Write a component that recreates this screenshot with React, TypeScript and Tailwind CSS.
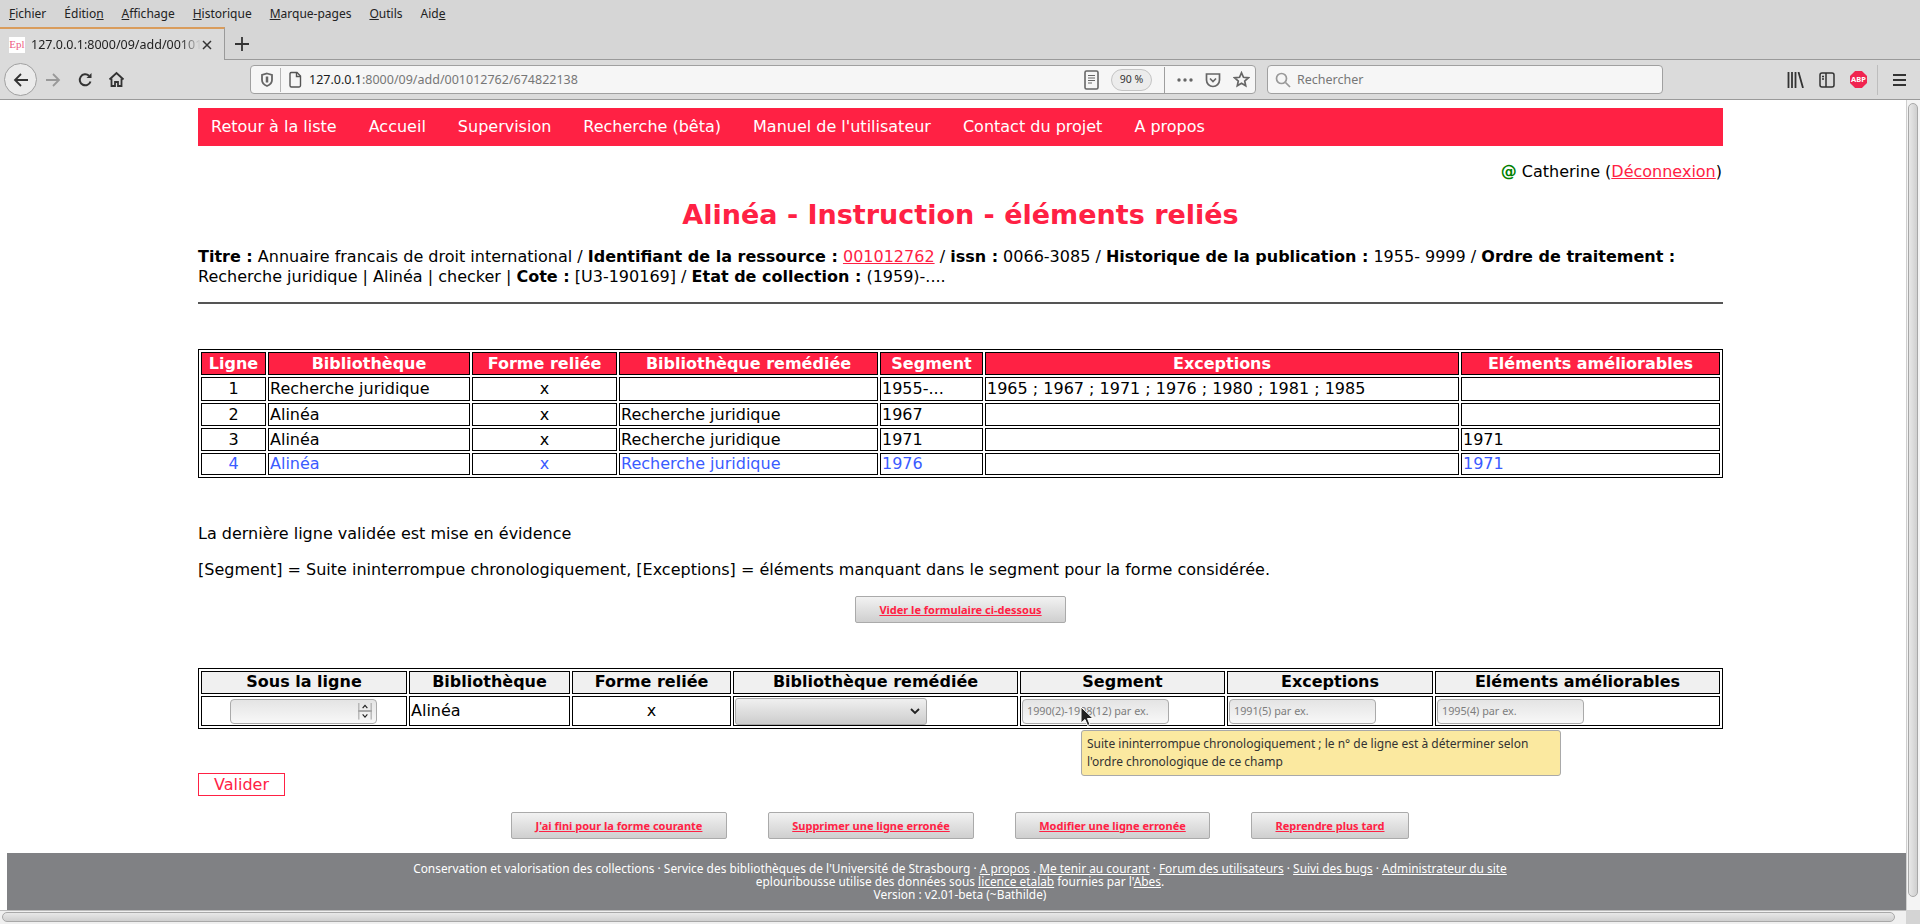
import React from "react";

const RED = "text-[#ff2144]";

function U({ children }: { children: React.ReactNode }) {
  return <span className="underline">{children}</span>;
}

function MenuBar() {
  return (
    <div className="h-[27px] bg-[#d6d6d6] flex items-center pl-[9px] gap-[18px] text-[12px] text-[#222] font-['Noto_Sans',sans-serif]">
      <span><U>F</U>ichier</span>
      <span>Éditio<U>n</U></span>
      <span><U>A</U>ffichage</span>
      <span><U>H</U>istorique</span>
      <span><U>M</U>arque-pages</span>
      <span><U>O</U>utils</span>
      <span>Aid<U>e</U></span>
    </div>
  );
}

function TabStrip() {
  return (
    <div className="h-[33px] bg-[#d6d6d6] flex border-b border-[#9a9a9a] font-['Noto_Sans',sans-serif]">
      <div className="w-[225px] h-[33px] border-t-2 border-[#d99c5c] border-r border-r-[#9a9a9a] bg-[#dadada] flex items-center pl-[9px] pr-[11px]">
        <div className="w-[16px] h-[16px] bg-white flex items-center justify-center text-[11px] leading-none text-[#ee5a80] font-['Liberation_Serif',serif] shrink-0">Epl</div>
        <span className="ml-[6px] pt-px text-[12.5px] text-[#222] whitespace-nowrap overflow-hidden w-[170px] [mask-image:linear-gradient(to_right,black_88%,transparent)]">127.0.0.1:8000/09/add/00101</span>
        <svg width="12" height="12" viewBox="0 0 12 12" className="ml-auto shrink-0" stroke="#333" strokeWidth="1.5"><path d="M2 2l8 8M10 2l-8 8" /></svg>
      </div>
      <svg width="16" height="16" viewBox="0 0 16 16" className="ml-[9px] mt-[9px]" stroke="#333" strokeWidth="1.8"><path d="M8 1v14M1 8h14" /></svg>
    </div>
  );
}

function Toolbar() {
  return (
    <div className="h-[40px] bg-[#dbdbdb] border-b border-[#9a9a9a] flex items-center font-['Noto_Sans',sans-serif]">
      <div className="ml-[4px] w-[33px] h-[33px] rounded-full border border-[#a0a0a0] bg-[#ebebeb] flex items-center justify-center shrink-0">
        <svg width="18" height="18" viewBox="0 0 18 18" fill="none" stroke="#333" strokeWidth="1.8"><path d="M16 9H3M9 3L3 9l6 6" /></svg>
      </div>
      <svg width="18" height="18" viewBox="0 0 18 18" fill="none" stroke="#999" strokeWidth="1.8" className="ml-[7px] shrink-0"><path d="M2 9h13M9 3l6 6-6 6" /></svg>
      <svg width="16" height="16" viewBox="0 0 16 16" fill="none" stroke="#333" strokeWidth="2" className="ml-[15px] shrink-0"><path d="M13.5 9.5A5.5 5.5 0 1 1 12 3.8" /><path d="M14.5 1v5h-5z" fill="#333" stroke="none" /></svg>
      <svg width="17" height="17" viewBox="0 0 17 17" className="ml-[15px] shrink-0" fill="none" stroke="#333" strokeWidth="1.8"><path d="M1.5 8.5L8.5 2l7 6.500" /><path d="M3.500 7.500V15h3.500v-4h3v4h3.500V7.500" /></svg>
      <div className="ml-[125px] w-[1006px] h-[29px] bg-[#f6f6f6] border border-[#a0a0a0] rounded-[4px] flex items-center shrink-0">
        <svg width="14" height="16" viewBox="0 0 14 16" className="ml-[9px] shrink-0" fill="none" stroke="#666" strokeWidth="1.800"><path d="M7 1.500l5 1.500v5c0 3-2.500 5-5 6-2.500-1-5-3-5-6V3z" /><path d="M7 4.500v6" strokeWidth="2.500" /></svg>
        <div className="w-px h-[24px] bg-[#b5b5b5] ml-[6px]" />
        <svg width="14" height="17" viewBox="0 0 14 17" className="ml-[7px] shrink-0" fill="none" stroke="#555" strokeWidth="1.400"><path d="M2 2.500a1.500 1.500 0 0 1 1.500-1H9l3.500 3.500v9.500a1.500 1.500 0 0 1-1.500 1.500H3.500A1.500 1.500 0 0 1 2 14.500z" /><path d="M8.500 1.500V5.500h4" /></svg>
        <span className="ml-[7px] pt-[2px] text-[12.500px] text-[#767676]"><span className="text-[#1c1c1c]">127.0.0.1</span>:8000/09/add/001012762/674822138</span>
        <svg width="15" height="20" viewBox="0 0 15 20" className="ml-auto shrink-0" fill="none" stroke="#666" strokeWidth="1.600"><rect x="1" y="1" width="13" height="18" rx="1.500" /><path d="M4 5.500h7M4 8h7M4 10.500h7M4 13h4" strokeWidth="1.100" /></svg>
        <div className="ml-[12px] w-[41px] h-[22px] rounded-full border border-[#c4c4c4] bg-[#ececec] flex items-center justify-center text-[10.500px] text-[#333] shrink-0">90 %</div>
        <div className="w-px h-[26px] bg-[#9e9e9e] ml-[12px]" />
        <svg width="16" height="4" viewBox="0 0 16 4" className="ml-[12px] shrink-0" fill="#666"><circle cx="2" cy="2" r="1.700" /><circle cx="8" cy="2" r="1.700" /><circle cx="14" cy="2" r="1.700" /></svg>
        <svg width="16" height="16" viewBox="0 0 16 16" className="ml-[12px] shrink-0" fill="none" stroke="#666" strokeWidth="1.700"><path d="M1.500 2h13v6a6.500 6.500 0 0 1-13 0z" /><path d="M5 6.500l3 3 3-3" /></svg>
        <svg width="17" height="17" viewBox="0 0 17 17" className="ml-[12px] shrink-0" fill="none" stroke="#666" strokeWidth="1.700"><path d="M8.500 1.800l2 4.500 4.800.5-3.600 3.200 1 4.800-4.200-2.500-4.200 2.500 1-4.800L1.700 6.800l4.800-.5z" /></svg>
        <span className="w-[5px] shrink-0" />
      </div>
      <div className="ml-[11px] w-[396px] h-[29px] bg-[#f6f6f6] border border-[#a0a0a0] rounded-[4px] flex items-center shrink-0">
        <svg width="16" height="16" viewBox="0 0 16 16" className="ml-[7px] shrink-0" fill="none" stroke="#999" strokeWidth="1.700"><circle cx="6.500" cy="6.500" r="5" /><path d="M10.500 10.500l4.500 4.500" /></svg>
        <span className="ml-[6px] pt-[2px] text-[12.500px] text-[#777]">Rechercher</span>
      </div>
      <svg width="17" height="16" viewBox="0 0 17 16" className="ml-[124px] shrink-0" fill="none" stroke="#333" strokeWidth="1.800"><path d="M1.500 0v16M5 0v16M8.500 0v16M11.500 0l4.500 16" /></svg>
      <svg width="16" height="16" viewBox="0 0 16 16" className="ml-[15px] shrink-0" fill="none" stroke="#333" strokeWidth="1.500"><rect x="1" y="1" width="14" height="14" rx="2" /><path d="M7 1v14M3 4.500h2M3 7h2" /></svg>
      <div className="ml-[15px] w-[17px] h-[17px] [clip-path:polygon(30%_0,70%_0,100%_30%,100%_70%,70%_100%,30%_100%,0_70%,0_30%)] bg-[#f0244f] flex items-center justify-center text-white text-[7.500px] font-bold leading-none shrink-0">ABP</div>
      <div className="ml-[10px] w-px h-[30px] bg-[#bdbdbd] shrink-0" />
      <svg width="13" height="14" viewBox="0 0 13 14" className="ml-[15px] shrink-0" stroke="#333" strokeWidth="1.800"><path d="M0 2h13M0 7h13M0 12h13" /></svg>
    </div>
  );
}

const th1 = "bg-[#ff2144] text-white font-bold border border-black p-0 h-[23px] leading-none";
const td = "border border-black px-px py-0 leading-none";
const rowHeights = ["h-[24px]", "h-[23px]", "h-[23px]", "h-[22px]"];

type Row = [string, string, string, string, string, string, string];
const rows: Row[] = [
  ["1", "Recherche juridique", "x", "", "1955-...", "1965 ; 1967 ; 1971 ; 1976 ; 1980 ; 1981 ; 1985", ""],
  ["2", "Alinéa", "x", "Recherche juridique", "1967", "", ""],
  ["3", "Alinéa", "x", "Recherche juridique", "1971", "", "1971"],
  ["4", "Alinéa", "x", "Recherche juridique", "1976", "", "1971"],
];

function ResultTable() {
  return (
    <table className="mt-[45px] w-[1525px] table-fixed border-separate border-spacing-[2px] border border-black">
      <thead>
        <tr>
          <th className={`${th1} w-[65px]`}>Ligne</th>
          <th className={`${th1} w-[202px]`}>Bibliothèque</th>
          <th className={`${th1} w-[145px]`}>Forme reliée</th>
          <th className={`${th1} w-[259px]`}>Bibliothèque remédiée</th>
          <th className={`${th1} w-[103px]`}>Segment</th>
          <th className={`${th1} w-[474px]`}>Exceptions</th>
          <th className={`${th1} w-[259px]`}>Eléments améliorables</th>
        </tr>
      </thead>
      <tbody>
        {rows.map((r, i) => (
          <tr key={i} className={i === 3 ? "text-[#3a5bff]" : "text-black"}>
            <td className={`${td} ${rowHeights[i]} text-center`}>{r[0]}</td>
            <td className={td}>{r[1]}</td>
            <td className={`${td} text-center`}>{r[2]}</td>
            <td className={td}>{r[3]}</td>
            <td className={td}>{r[4]}</td>
            <td className={td}>{r[5]}</td>
            <td className={td}>{r[6]}</td>
          </tr>
        ))}
      </tbody>
    </table>
  );
}

const th2 = "bg-[#f0f0f0] text-black font-bold border border-black p-0 h-[23px] leading-none pb-px";
const fieldBg = "bg-gradient-to-b from-[#e4e4e4] to-[#f8f8f8] border border-[#aaaaaa] rounded-[4px]";

function PlaceInput({ text, w }: { text: string; w: string }) {
  return (
    <input
      readOnly
      placeholder={text}
      className={`${w} h-[25px] block ${fieldBg} px-[4px] pb-[2px] text-[10.800px] font-['Noto_Sans',sans-serif] placeholder:text-[#7d7d7d] outline-none`}
    />
  );
}

function FormTable() {
  return (
    <div className="relative mt-[45px]">
      <table className="w-[1525px] table-fixed border-separate border-spacing-[2px] border border-black">
        <thead>
          <tr>
            <th className={`${th2} w-[206px]`}>Sous la ligne</th>
            <th className={`${th2} w-[161px]`}>Bibliothèque</th>
            <th className={`${th2} w-[159px]`}>Forme reliée</th>
            <th className={`${th2} w-[285px]`}>Bibliothèque remédiée</th>
            <th className={`${th2} w-[205px]`}>Segment</th>
            <th className={`${th2} w-[206px]`}>Exceptions</th>
            <th className={`${th2} w-[285px]`}>Eléments améliorables</th>
          </tr>
        </thead>
        <tbody>
          <tr>
            <td className="border border-black p-0 h-[30px]">
              <div className={`ml-[28px] w-[147px] h-[25px] ${fieldBg} flex justify-end pr-[4px] py-[3px]`}>
                <div className="w-[14px] flex flex-col">
                  <svg width="14" height="8" viewBox="0 0 14 8" fill="none"><path d="M.5 8V0M13.500 8V0" stroke="#999" /><path d="M4.500 5.500L7 2.500l2.500 3" stroke="#222" strokeWidth="1.200" /></svg>
                  <div className="h-[2px] bg-[#a8a8a8]" />
                  <svg width="14" height="8" viewBox="0 0 14 8" fill="none"><path d="M.5 0v8M13.500 0v8" stroke="#999" /><path d="M4.500 2.500L7 5.500l2.500-3" stroke="#222" strokeWidth="1.200" /></svg>
                </div>
              </div>
            </td>
            <td className="border border-black px-px py-0 leading-none">Alinéa</td>
            <td className="border border-black p-0 text-center leading-none">x</td>
            <td className="border border-black p-0">
              <div className="ml-px w-[192px] h-[27px] bg-gradient-to-b from-[#f0f0f0] to-[#cdcdcd] border border-[#aaaaaa] rounded-[3px] flex items-center justify-end pr-[6px]">
                <svg width="10" height="7" viewBox="0 0 10 7" fill="none" stroke="#222" strokeWidth="1.800"><path d="M1 1l4 4 4-4" /></svg>
              </div>
            </td>
            <td className="border border-black p-0 pl-px"><PlaceInput text="1990(2)-1998(12) par ex." w="w-[147px]" /></td>
            <td className="border border-black p-0 pl-px"><PlaceInput text="1991(5) par ex." w="w-[147px]" /></td>
            <td className="border border-black p-0 pl-px"><PlaceInput text="1995(4) par ex." w="w-[147px]" /></td>
          </tr>
        </tbody>
      </table>
      <div className="absolute left-[883px] top-[62px] w-[480px] h-[46px] bg-[#fbe9a0] border border-[#a9a9a9] rounded-[3px] px-[5px] text-[12px] leading-[18px] text-[#333] font-['Noto_Sans',sans-serif] py-[4px]">
        Suite ininterrompue chronologiquement ; le n° de ligne est à déterminer selon l'ordre chronologique de ce champ
      </div>
      <svg width="14" height="21" viewBox="0 0 14 21" className="absolute left-[882px] top-[38px]"><path d="M1 1v16l4-3.500 2.500 6 2.500-1-2.500-6H13z" fill="#222" stroke="#fff" strokeWidth="1" /></svg>
    </div>
  );
}

function LinkButton({ label, w, ml }: { label: string; w: string; ml?: string }) {
  return (
    <button className={`${w} ${ml ?? ""} h-[27px] bg-gradient-to-b from-[#f2f2f2] to-[#cfcfcf] border border-[#aaaaaa] rounded-[2px] text-[11px] font-bold underline ${RED} font-['Noto_Sans',sans-serif]`}>
      {label}
    </button>
  );
}

function Footer() {
  return (
    <div className="mt-[14px] h-[58px] bg-[#808184] text-white text-[11.900px] leading-[13px] text-center pt-[9px] pl-[7px] font-['Noto_Sans',sans-serif]">
      <div>
        Conservation et valorisation des collections · Service des bibliothèques de l'Université de Strasbourg · <U>A propos</U> . <U>Me tenir au courant</U> · <U>Forum des utilisateurs</U> · <U>Suivi des bugs</U> · <U>Administrateur du site</U>
      </div>
      <div>
        eplouribousse utilise des données sous <U>licence etalab</U> fournies par l'<U>Abes</U>.
      </div>
      <div>Version : v2.01-beta (~Bathilde)</div>
    </div>
  );
}

const nav = ["Retour à la liste", "Accueil", "Supervision", "Recherche (bêta)", "Manuel de l'utilisateur", "Contact du projet", "A propos"];

function Page() {
  return (
    <div className="flex-1 min-w-0 pl-[7px] bg-white text-black text-[16px] leading-[20px] font-['DejaVu_Sans',sans-serif] overflow-hidden">
      <div className="w-[1525px] ml-[191px]">
        <div className="mt-[8px] h-[38px] bg-[#ff2144] text-white flex items-center gap-[32px] pl-[13px]">
          {nav.map((n) => <span key={n}>{n}</span>)}
        </div>
        <div className="mt-[16px] text-right pr-[1px]">
          <span className="text-[#008000] font-bold">@</span> Catherine (<span className={`${RED} underline`}>Déconnexion</span>)
        </div>
        <h1 className={`mt-[16px] h-[34px] leading-[34px] text-center text-[27px] font-bold ${RED}`}>Alinéa - Instruction - éléments reliés</h1>
        <p className="mt-[15px]">
          <b>Titre :</b> Annuaire francais de droit international / <b>Identifiant de la ressource :</b> <span className={`${RED} underline`}>001012762</span> / <b>issn :</b> 0066-3085 / <b>Historique de la publication :</b> 1955- 9999 / <b>Ordre de traitement :</b> Recherche juridique | Alinéa | checker | <b>Cote :</b> [U3-190169] / <b>Etat de collection :</b> (1959)-....
        </p>
        <div className="mt-[15px] h-[2px] bg-[#555]" />
        <ResultTable />
        <p className="mt-[46px]">La dernière ligne validée est mise en évidence</p>
        <p className="mt-[16px]">[Segment] = Suite ininterrompue chronologiquement, [Exceptions] = éléments manquant dans le segment pour la forme considérée.</p>
        <div className="mt-[16px] flex justify-center">
          <LinkButton label="Vider le formulaire ci-dessous" w="w-[211px]" />
        </div>
        <FormTable />
        <button className={`mt-[44px] block w-[87px] h-[23px] border border-[#ff2144] ${RED} leading-none`}>Valider</button>
        <div className="mt-[16px] flex justify-start pl-[313px]">
          <LinkButton label="J'ai fini pour la forme courante" w="w-[216px]" />
          <LinkButton label="Supprimer une ligne erronée" w="w-[206px]" ml="ml-[41px]" />
          <LinkButton label="Modifier une ligne erronée" w="w-[195px]" ml="ml-[41px]" />
          <LinkButton label="Reprendre plus tard" w="w-[158px]" ml="ml-[41px]" />
        </div>
      </div>
      <Footer />
    </div>
  );
}

function VScroll() {
  return (
    <div className="w-[14px] bg-[#f4f4f4] border-l border-[#cfcfcf] pl-[1px] pt-[3px] shrink-0">
      <div className="w-[10px] h-[794px] rounded-[5px] border border-[#a8a8a8] bg-gradient-to-r from-[#e8e8e8] to-[#cfcfcf]" />
    </div>
  );
}

function HScroll() {
  return (
    <div className="h-[14px] flex">
      <div className="w-[1906px] bg-[#f0f0f0] border-t border-[#bdbdbd] pt-[1px] pl-[2px]">
        <div className="w-[1893px] h-[10px] rounded-[5px] border border-[#a8a8a8] bg-gradient-to-b from-[#e8e8e8] to-[#cfcfcf]" />
      </div>
      <div className="flex-1 bg-[#d4d4d4]" />
    </div>
  );
}

export default function App() {
  return (
    <div className="w-[1920px] h-[924px] overflow-hidden flex flex-col bg-white">
      <MenuBar />
      <TabStrip />
      <Toolbar />
      <div className="h-[810px] flex">
        <Page />
        <VScroll />
      </div>
      <HScroll />
    </div>
  );
}
